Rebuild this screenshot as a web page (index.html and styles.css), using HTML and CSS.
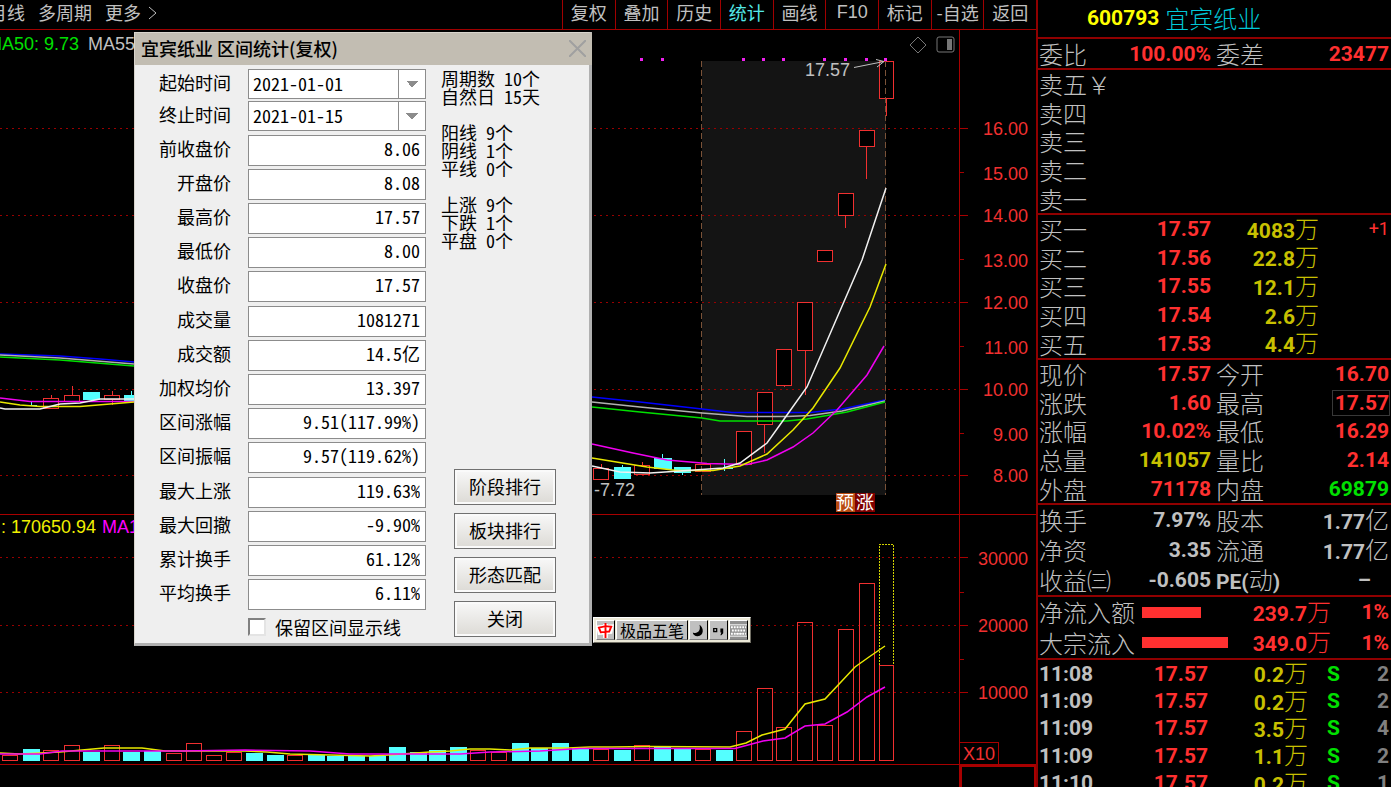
FILE: index.html
```html
<!DOCTYPE html>
<html lang="zh-CN">
<head>
<meta charset="utf-8">
<title>宜宾纸业 600793</title>
<link rel="stylesheet" href="styles.css">
</head>
<body>
<div class="terminal">
  <main class="workspace">
    <nav class="toolbar">
      <div class="periods">
        <button class="period">月线</button>
        <button class="period">多周期</button>
        <button class="period">更多
          <svg class="chevron" viewBox="0 0 9 14"><path d="M1 1l7 6-7 6"/></svg>
        </button>
      </div>
      <div class="tools">
        <button class="tool">复权</button>
        <button class="tool">叠加</button>
        <button class="tool">历史</button>
        <button class="tool tool-active">统计</button>
        <button class="tool">画线</button>
        <button class="tool tool-latin">F10</button>
        <button class="tool">标记</button>
        <button class="tool">-自选</button>
        <button class="tool">返回</button>
      </div>
    </nav>

    <svg class="chart" viewBox="0 30 1036 757" role="img" aria-label="K线图">
      <rect x="702" y="61" width="184" height="434" fill="#141414"/>
      <g class="grid">
        <path d="M0 128.500H959M0 215.500H959M0 302.500H959M0 389.500H959M0 475.500H959M0 557.500H959M0 625.500H959M0 692.500H959"/>
      </g>
      <g class="frame">
        <path d="M0 514.500H1036M0 764.500H1036M959.500 30V787"/>
        <path d="M960 128.500h8M960 215.500h8M960 302.500h8M960 389.500h8M960 475.500h8M960 557.500h8M960 625.500h8M960 692.500h8M960 172.500h4M960 259.500h4M960 346.500h4M960 433.500h4M960 592.500h4M960 659.500h4"/>
        <path d="M960 742.500h38.500v22"/>
        <path d="M961 787V766H1035V787" stroke-width="2"/>
      </g>

      <g class="up">
        <path d="M51 395v4M72 386v10M112 391v5M112 400v5M601 464v5M642 462v3M764.500 424v29M784.500 385v2M805 350v45M845.500 215v13M866.500 146v33M886.500 99v17"/>
        <path class="body" d="M43.500 398.500h15v10h-15zM64.500 395.500h15v6h-15zM104.500 395.500h15v4h-15zM593.500 468.500h15v11h-15zM634.500 465.500h15v9h-15zM695.500 464.500h15v7h-15zM736.500 431.500h15v33h-15zM757.500 392.500h15v32h-15zM776.500 349.500h15v36h-15zM797.500 302.500h15v48h-15zM817.500 250.500h15v11h-15zM838.500 193.500h15v22h-15zM859.500 130.500h15v16h-15zM879.500 61.500h14v37h-14z"/>
        <path d="M2.500 755.500h15v5h-15zM43.500 750.500h15v10h-15zM64.500 745.500h15v15h-15zM104.500 745.500h15v15h-15zM166.500 753.500h15v7h-15zM186.500 743.500h15v17h-15zM206.500 755.500h15v5h-15zM226.500 752.500h15v8h-15zM287.500 755.500h15v5h-15zM470.500 750.500h15v10h-15zM491.500 752.500h15v8h-15zM593.500 749.500h15v11h-15zM634.500 745.500h15v15h-15zM695.500 749.500h15v11h-15zM736.500 731.500h15v29h-15zM757.500 688.500h15v72h-15zM776.500 727.500h15v33h-15zM797.500 622.500h15v138h-15zM817.500 725.500h15v35h-15zM838.500 629.500h15v131h-15zM859.500 583.500h15v177h-15zM879.500 665.500h14v95h-14z"/>
      </g>
      <g class="down">
        <path d="M83 392h17v8h-17zM124 395h17v6h-17zM131 391h1v4h-1zM23 405h14v1h-14zM31 402h1v4h-1zM614 467h17v12h-17zM622 465h1v3h-1zM654 458h18v11h-18zM662 454h1v4h-1zM674 467h17v6h-17zM682 472h1v3h-1zM724 459h1v12h-1zM716 468h17v1h-17z"/>
        <path d="M23 749h17v12h-17zM83 752h17v9h-17zM123 752h17v9h-17zM144 751h17v10h-17zM246 753h17v8h-17zM267 755h17v6h-17zM308 755h17v6h-17zM327 756h17v5h-17zM348 756h17v5h-17zM369 756h17v5h-17zM389 747h17v14h-17zM410 752h17v9h-17zM429 750h17v11h-17zM450 747h17v14h-17zM512 743h17v18h-17zM531 748h17v13h-17zM552 743h17v18h-17zM572 748h17v13h-17zM614 750h17v11h-17zM654 746h17v15h-17zM674 749h17v12h-17zM716 750h17v11h-17z"/>
      </g>
      <path class="range" d="M701.500 61V495M885.500 61V495"/>
      <path class="forecast" d="M879.500 665V544.500H893.500V665"/>

      <g class="averages">
        <path class="blue" d="M0 354L60 356 100 359 134 362M592 397L640 402 702 409 732 412.500H810L842 409 885 400"/>
        <path class="grey" d="M0 355L60 358 134 364M592 402L640 407 702 413 747 416.500H787L810 415.500 842 411 885 401"/>
        <path class="green" d="M0 357L60 360 134 366M592 407L640 412 702 418 720 421H787L807 419 847 412 885 402"/>
        <path class="magenta" d="M0 398L30 401.500H134M592 444L633 453 667 460 707 463.500 747 464.500 767 460 793 447 813 433 837 410 867 375 884 346"/>
        <path class="yellow" d="M0 402L20 405 40 406.500H80L134 402M592 458L647 467 677 470.500H713L740 466 767 454 793 430 813 408 840 368 870 307 886 264"/>
        <path class="white" d="M0 408L5 409H40L60 404 80 403 100 399H134M592 466L620 472 650 473 680 471 723 468 740 463 767 443 787 415 807 387 833 327 862 260 872 230 886 188"/>
        <path class="yellow" d="M0 753L20 754 60 752 82 750 104 748H142L165 751 205 751H245L267 752 290 754 330 755 370 756 388 755 430 752 450 751 470 749H490L510 750 530 748H568L590 747H612L650 746.500 730 747 746 743 762 735 785 729 805 704 825 699 855 667 869 657 885 646"/>
        <path class="magenta" d="M0 754H40L62 751H182L245 750 310 751 350 754 425 754 460 754 490 752 540 751 580 748.500H735L763 741 785 738 805 726 825 724 847 712 867 697 885 687"/>
      </g>

      <path class="signals" d="M640 58h3v3h-3zM661 58h3v3h-3zM742 58h3v3h-3zM762 58h3v3h-3zM782 58h3v3h-3zM823 58h3v3h-3zM844 58h3v3h-3zM865 58h3v3h-3zM884 58h3v3h-3z"/>
      <g class="marks">
        <path d="M854 67.500L884 61.500M876 59.500L884 61.500 877 67"/>
        <path class="dim" d="M918 37l8 8-8 8-8-8z"/>
        <rect class="dim" x="937" y="37" width="17" height="15" rx="2"/>
        <path class="solid" d="M947 39h5v11h-5z"/>
      </g>
      <g class="labels">
        <text class="t-green" x="79" y="50" text-anchor="end">MA50: 9.73</text>
        <text class="t-grey" x="88" y="50">MA55:</text>
        <text class="t-yellow" x="96" y="533" text-anchor="end">: 170650.94</text>
        <text class="t-magenta" x="102" y="533">MA10</text>
        <text class="t-grey" x="850" y="76" text-anchor="end">17.57</text>
        <text class="t-grey" x="635" y="496" text-anchor="end">-7.72</text>
        <g class="t-axis" text-anchor="end">
          <text x="1028" y="135">16.00</text>
          <text x="1028" y="180">15.00</text>
          <text x="1028" y="222">14.00</text>
          <text x="1028" y="267">13.00</text>
          <text x="1028" y="309">12.00</text>
          <text x="1028" y="354">11.00</text>
          <text x="1028" y="396">10.00</text>
          <text x="1028" y="441">9.00</text>
          <text x="1028" y="482">8.00</text>
          <text x="1028" y="565">30000</text>
          <text x="1028" y="632">20000</text>
          <text x="1028" y="699">10000</text>
          <text x="995" y="760">X10</text>
        </g>
        <rect x="836" y="493" width="19" height="19" fill="#b84a10"/>
        <rect x="855" y="493" width="20" height="19" fill="#800000"/>
        <text class="tag" x="836" y="509">预</text>
        <text class="tag" x="856" y="509">涨</text>
      </g>
    </svg>

    <section class="dialog" role="dialog" aria-labelledby="dlg-title">
      <header class="dialog-head">
        <h2 id="dlg-title">宜宾纸业 区间统计(复权)</h2>
        <button class="dialog-x" aria-label="关闭窗口">
          <svg viewBox="0 0 17 17"><path d="M0 0l17 17M17 0L0 17"/></svg>
        </button>
      </header>
      <div class="dialog-body">
        <form class="stats">
          <div class="group dates">
            <label for="d1">起始时间</label>
            <select id="d1"><option>2021-01-01</option></select>
            <label for="d2">终止时间</label>
            <select id="d2"><option>2021-01-15</option></select>
          </div>
          <div class="group">
            <label for="s1">前收盘价</label><input id="s1" value="8.06" readonly>
            <label for="s2">开盘价</label><input id="s2" value="8.08" readonly>
            <label for="s3">最高价</label><input id="s3" value="17.57" readonly>
            <label for="s4">最低价</label><input id="s4" value="8.00" readonly>
            <label for="s5">收盘价</label><input id="s5" value="17.57" readonly>
          </div>
          <div class="group">
            <label for="s6">成交量</label><input id="s6" value="1081271" readonly>
            <label for="s7">成交额</label><input id="s7" value="14.5亿" readonly>
            <label for="s8">加权均价</label><input id="s8" value="13.397" readonly>
            <label for="s9">区间涨幅</label><input id="s9" value="9.51(117.99%)" readonly>
            <label for="s10">区间振幅</label><input id="s10" value="9.57(119.62%)" readonly>
          </div>
          <div class="group">
            <label for="s11">最大上涨</label><input id="s11" value="119.63%" readonly>
            <label for="s12">最大回撤</label><input id="s12" value="-9.90%" readonly>
            <label for="s13">累计换手</label><input id="s13" value="61.12%" readonly>
            <label for="s14">平均换手</label><input id="s14" value="6.11%" readonly>
          </div>
          <div class="keep">
            <input type="checkbox" id="keep">
            <label for="keep">保留区间显示线</label>
          </div>
        </form>
        <div class="dialog-side">
          <pre class="counts">周期数 10个
自然日 15天

阳线 9个
阴线 1个
平线 0个

上涨 9个
下跌 1个
平盘 0个</pre>
          <div class="actions">
            <button>阶段排行</button>
            <button>板块排行</button>
            <button>形态匹配</button>
            <button>关闭</button>
          </div>
        </div>
      </div>
    </section>

    <div class="ime">
      <button class="ime-zh" aria-label="中文">
        <svg viewBox="0 0 18 18"><path stroke="#fff" stroke-width="5" d="M9 2v15M2 6l13-1-1 5-11 1z"/><path d="M9 1v16M2 6c4-1 8-2 13-1-1 2-1 3-2 5-3 0-6 1-9 1z"/></svg>
      </button>
      <button class="ime-name">极品五笔</button>
      <button aria-label="半角"><svg viewBox="0 0 18 18"><path fill="#000" d="M10 3c5 3 5 12-2 12-3 0-5-2-5-4 4 2 9-1 7-8z"/></svg></button>
      <button aria-label="标点"><svg viewBox="0 0 18 18"><path fill="#fff" stroke="#000" stroke-width="1.500" d="M4 7h3v3h-3z"/><path fill="#000" d="M11 7h3v5l-2 2h-1l1-3h-1z"/></svg></button>
      <button class="ime-keys" aria-label="软键盘"><svg viewBox="0 0 18 18"><path stroke="#fff" stroke-width="2" stroke-dasharray="2 1" d="M1 5.500h16M2 9h15M1 12.500h16"/><path stroke="#fff" stroke-width="1" d="M0 3h18M0 15h18M6 12.500h7"/></svg></button>
    </div>
  </main>

  <aside class="quote">
    <header class="stock"><b>600793</b><span>宜宾纸业</span></header>
    <table class="sheet one">
      <tr><th>委比</th><td class="red">100.00%</td><th>委差</th><td class="red">23477</td></tr>
    </table>
    <table class="sheet five">
      <tr><th>卖五￥</th></tr>
      <tr><th>卖四</th></tr>
      <tr><th>卖三</th></tr>
      <tr><th>卖二</th></tr>
      <tr><th>卖一</th></tr>
    </table>
    <table class="sheet five">
      <colgroup><col class="c-label"><col class="c-price"><col class="c-amount"><col></colgroup>
      <tr><th>买一</th><td class="red">17.57</td><td class="gold">4083<i>万</i></td><td class="delta">+1</td></tr>
      <tr><th>买二</th><td class="red">17.56</td><td class="gold">22.8<i>万</i></td><td></td></tr>
      <tr><th>买三</th><td class="red">17.55</td><td class="gold">12.1<i>万</i></td><td></td></tr>
      <tr><th>买四</th><td class="red">17.54</td><td class="gold">2.6<i>万</i></td><td></td></tr>
      <tr><th>买五</th><td class="red">17.53</td><td class="gold">4.4<i>万</i></td><td></td></tr>
    </table>
    <table class="sheet five">
      <colgroup><col class="c-label"><col class="c-price"><col class="c-second"><col></colgroup>
      <tr><th>现价</th><td class="red">17.57</td><th>今开</th><td class="red">16.70</td></tr>
      <tr><th>涨跌</th><td class="red">1.60</td><th>最高</th><td class="red"><span class="boxed">17.57</span></td></tr>
      <tr><th>涨幅</th><td class="red">10.02%</td><th>最低</th><td class="red">16.29</td></tr>
      <tr><th>总量</th><td class="gold">141057</td><th>量比</th><td class="red">2.14</td></tr>
      <tr><th>外盘</th><td class="red">71178</td><th>内盘</th><td class="green">69879</td></tr>
    </table>
    <table class="sheet three">
      <colgroup><col class="c-label"><col class="c-price"><col class="c-second"><col></colgroup>
      <tr><th>换手</th><td>7.97%</td><th>股本</th><td>1.77<i>亿</i></td></tr>
      <tr><th>净资</th><td>3.35</td><th>流通</th><td>1.77<i>亿</i></td></tr>
      <tr><th>收益㈢</th><td>-0.605</td><th><b>PE(</b>动<b>)</b></th><td class="none">–</td></tr>
    </table>
    <table class="sheet two">
      <colgroup><col class="f-label"><col class="f-bar"><col class="f-amount"><col></colgroup>
      <tr><th>净流入额</th><td><div class="bar" style="width:59px"></div></td><td class="red">239.7<i>万</i></td><td class="red">1%</td></tr>
      <tr><th>大宗流入</th><td><div class="bar" style="width:86px"></div></td><td class="red">349.0<i>万</i></td><td class="red">1%</td></tr>
    </table>
    <table class="sheet ticks">
      <colgroup><col class="k-time"><col class="k-price"><col class="k-amount"><col class="k-side"><col></colgroup>
      <tr><td class="left">11:08</td><td class="red">17.57</td><td class="gold">0.2<i>万</i></td><td class="green">S</td><td class="dimmed">2</td></tr>
      <tr><td class="left">11:09</td><td class="red">17.57</td><td class="gold">0.2<i>万</i></td><td class="green">S</td><td class="dimmed">2</td></tr>
      <tr><td class="left">11:09</td><td class="red">17.57</td><td class="gold">3.5<i>万</i></td><td class="green">S</td><td class="dimmed">4</td></tr>
      <tr><td class="left">11:09</td><td class="red">17.57</td><td class="gold">1.1<i>万</i></td><td class="green">S</td><td class="dimmed">2</td></tr>
      <tr><td class="left">11:10</td><td class="red">17.57</td><td class="gold">0.2<i>万</i></td><td class="green">S</td><td class="dimmed">1</td></tr>
    </table>
  </aside>
</div>
</body>
</html>
```
FILE: styles.css
```css
* { box-sizing: border-box; }
body {
  margin: 0;
  background: #000;
  color: #c0c0c0;
  font-family: "Noto Sans CJK SC", sans-serif;
  font-size: 18px;
  font-weight: 400;
}
button, input, select, label { font: inherit; color: inherit; }
button { border: 0; padding: 0; background: none; }

.terminal { display: flex; height: 100vh; overflow: hidden; }
.workspace { position: relative; flex: 1; min-width: 0; }

/* toolbar */
.toolbar {
  display: flex;
  justify-content: space-between;
  height: 30px;
  border-bottom: 1px solid #a00000;
}
.periods { display: flex; gap: 13px; margin-left: -11px; }
.period {
  display: flex;
  align-items: center;
  gap: 7px;
  padding-bottom: 4px;
  line-height: 25px;
  white-space: nowrap;
}
.chevron { width: 9px; height: 14px; fill: none; stroke: #c0c0c0; }
.tools { display: flex; width: 474px; }
.tool {
  flex: 1 1 0;
  min-width: 0;
  padding-bottom: 4px;
  border-left: 1px solid #a00000;
  line-height: 25px;
  white-space: nowrap;
}
.tool-active { color: #54e8e8; }
.tool-latin { font-family: "Liberation Sans", Arial, sans-serif; }

/* chart */
.chart { display: block; width: 100%; }
.chart path, .chart rect { shape-rendering: crispEdges; }
.grid path { stroke: #980000; stroke-dasharray: 2 4; }
.range { stroke: #7a5238; stroke-dasharray: 6 3; }
.frame path { fill: none; stroke: #a80000; }
.up path { fill: none; stroke: #f03030; }
.up .body { fill: #000; }
.down { fill: #54ffff; }
.forecast { fill: none; stroke: #d0d000; stroke-dasharray: 2 1; }
.chart .averages path { fill: none; stroke-width: 1.5; shape-rendering: auto; }
.averages .blue { stroke: #0000ff; }
.averages .grey { stroke: #b0b0b0; }
.averages .green { stroke: #00e000; }
.averages .magenta { stroke: #f000f0; }
.averages .yellow { stroke: #e8e800; }
.averages .white { stroke: #f0f0f0; }
.signals { fill: #f020f0; }
.marks path, .marks rect { fill: none; stroke: #c0c0c0; shape-rendering: auto; }
.marks .dim { stroke: #777; }
.marks .solid { fill: #777; stroke: none; }
.labels { font: 18px "Liberation Sans", Arial, sans-serif; }
.t-green { fill: #00e000; }
.t-grey { fill: #c0c0c0; }
.t-yellow { fill: #f0f000; }
.t-magenta { fill: #ff00ff; }
.t-axis { fill: #f03030; }
.tag { fill: #fff; font: 400 18px "Noto Sans CJK SC", sans-serif; }

/* range statistics dialog */
.dialog {
  position: absolute;
  left: 134px;
  top: 32px;
  width: 458px;
  background: #efefef;
  color: #000;
  border: 1px solid #d8d4cc;
  border-right: 3px solid #b0b0b0;
  border-bottom: 3px solid #b0b0b0;
}
.dialog-head {
  display: flex;
  align-items: center;
  justify-content: space-between;
  height: 32px;
  margin-right: -3px;
  padding: 0 6px 2px;
  background: #c2bdb2;
}
.dialog-head h2 { margin: 0; font-size: 18px; font-weight: 500; line-height: 28px; }
.dialog-x { display: flex; }
.dialog-x svg { width: 17px; height: 17px; stroke: #a0a0a0; stroke-width: 2; }
.dialog-body { display: flex; justify-content: space-between; padding: 4px 33px 3px 0; }
.stats { width: 291px; }
.group {
  display: grid;
  grid-template-columns: 96px 178px;
  column-gap: 17px;
  row-gap: 3px;
  grid-auto-rows: 31px;
  margin-bottom: 4px;
}
.dates { grid-auto-rows: 30px; row-gap: 2px; }
.group label { text-align: right; line-height: 27px; }
.group input, .group select {
  width: 178px;
  height: 100%;
  border: 1px solid #8c8c8c;
  border-radius: 0;
  background-color: #fff;
  font-feature-settings: "hwid";
}
.group input { padding: 0 5px 6px; text-align: right; }
.group select {
  appearance: none;
  padding: 0 4px 2px;
  background-image:
    conic-gradient(from -45deg at 50% 100%, #8c8c8c 90deg, transparent 0),
    linear-gradient(#8c8c8c, #8c8c8c);
  background-size: 12px 6px, 1px 100%;
  background-position: right 7px center, right 26px top;
  background-repeat: no-repeat;
}
.keep { display: flex; align-items: center; gap: 9px; height: 26px; margin-left: 113px; }
.keep input {
  appearance: none;
  width: 18px;
  height: 18px;
  margin: 0;
  border: 2px solid;
  border-color: #808080 #e4e4e4 #e4e4e4 #808080;
  background: #fff;
}
.keep label { line-height: 26px; }
.dialog-side { display: flex; flex-direction: column; justify-content: space-between; width: 115px; }
.counts {
  margin: 0;
  font: 400 18px/18px "Noto Sans CJK SC", sans-serif;
  font-feature-settings: "hwid";
}
.actions { display: flex; flex-direction: column; gap: 8px; margin-left: 13px; padding-bottom: 3px; }
.actions button {
  height: 36px;
  padding-bottom: 2px;
  border: 1px solid #707070;
  box-shadow: inset 0 0 0 2px #fafafa;
  background: linear-gradient(#f8f8f8, #dcdad5);
  line-height: 32px;
}

/* input method bar */
.ime {
  position: absolute;
  left: 593px;
  top: 617px;
  display: flex;
  gap: 1px;
  height: 26px;
  padding: 2px;
  background: #ece9d8;
  border: 1px solid #fff;
  border-right-color: #716f64;
  border-bottom-color: #716f64;
  color: #000;
}
.ime button {
  width: 19px;
  background: #c0c0c0;
  border: 1px solid #fff;
  border-right-color: #000;
  border-bottom-color: #808080;
}
.ime .ime-name { width: 72px; font-size: 16px; line-height: 16px; }
.ime svg { display: block; width: 17px; height: 17px; fill: none; }
.ime .ime-zh svg { stroke: #f00; stroke-width: 2; }
.ime .ime-keys { background: #909090; }

/* quote panel */
.quote { width: 355px; border-left: 2px solid #900000; overflow: hidden; }
.stock {
  display: flex;
  align-items: center;
  gap: 6px;
  height: 39px;
  padding: 0 0 2px 49px;
  border-bottom: 2px solid #900000;
  color: #00c8d8;
  font-size: 24px;
  font-weight: 300;
  line-height: 34px;
}
.stock b { color: #ff0; font: 700 21px/34px Roboto, sans-serif; }
.sheet {
  width: 100%;
  table-layout: fixed;
  border-collapse: separate;
  border-spacing: 0;
  border-bottom: 2px solid #900000;
  padding: 0 2px 0 1px;
  font: 700 21px/24px Roboto, "Noto Sans CJK SC", sans-serif;
}
.sheet th, .sheet td { padding: 0; white-space: nowrap; text-align: right; }
.sheet th { font: 300 24px/24px "Noto Sans CJK SC", sans-serif; text-align: left; }
.sheet th b { font: 700 21px/24px Roboto, sans-serif; }
.sheet i { font: 300 24px/24px "Noto Sans CJK SC", sans-serif; }
.sheet .left { text-align: left; }
.sheet td + th { padding-left: 5px; }
.one { height: 31px; }
.five { height: 145px; }
.three { height: 92px; }
.two { height: 63px; }
.ticks { height: 137px; border-bottom: 0; }
.c-label, .one th { width: 60px; }
.c-price, .one td { width: 112px; }
.c-amount { width: 108px; }
.c-second { width: 70px; }
.one td:last-child { width: auto; }
.f-label { width: 103px; }
.f-bar { width: 90px; }
.f-amount { width: 99px; }
.k-time { width: 80px; }
.k-price { width: 89px; }
.k-amount { width: 100px; }
.k-side { width: 32px; }
.bar { height: 11px; background: #ff3030; }
.red { color: #ff3030; }
.gold { color: #c8c000; }
.green { color: #00e000; }
.sheet .dimmed { color: #808080; }
.sheet .delta { color: #ff3030; font-size: 18px; font-weight: 400; }
.sheet .none { padding-right: 18px; }
.boxed { display: inline-block; padding-left: 2px; outline: 1px solid #383838; }
```
